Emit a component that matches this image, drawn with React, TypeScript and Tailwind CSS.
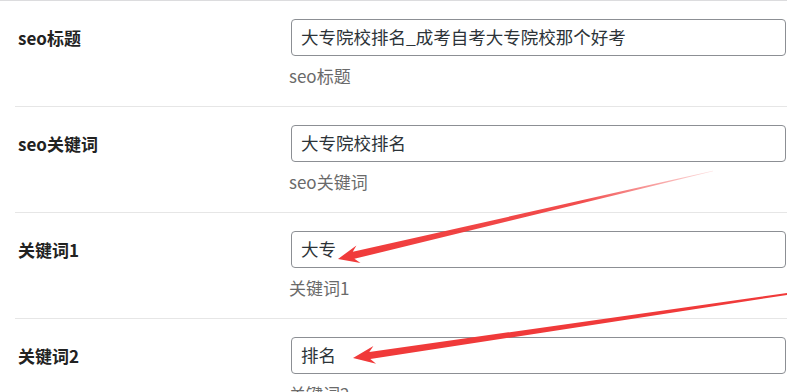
const FIELDS = [
  { label: 'seo标题', value: '大专院校排名_成考自考大专院校那个好考', help: 'seo标题' },
  { label: 'seo关键词', value: '大专院校排名', help: 'seo关键词' },
  { label: '关键词1', value: '大专', help: '关键词1' },
  { label: '关键词2', value: '排名', help: '关键词2' },
];

type Pt = [number, number];

// tapered annotation arrow: thin tail, wide shaft near the head, triangle tip
function arrowPoints(tail: Pt, tip: Pt, headLen = 18, headHalf = 8, shaft = 3, tailW = 0.4) {
  const dx = tip[0] - tail[0];
  const dy = tip[1] - tail[1];
  const len = Math.hypot(dx, dy);
  const ux = dx / len;
  const uy = dy / len;
  const nx = -uy;
  const ny = ux;
  const bx = tip[0] - ux * headLen;
  const by = tip[1] - uy * headLen;
  const pts: Pt[] = [
    [tail[0] + nx * tailW, tail[1] + ny * tailW],
    [bx + ux * 3 + nx * shaft, by + uy * 3 + ny * shaft],
    [bx - ux * 2 + nx * headHalf, by - uy * 2 + ny * headHalf],
    tip,
    [bx - ux * 2 - nx * headHalf, by - uy * 2 - ny * headHalf],
    [bx + ux * 3 - nx * shaft, by + uy * 3 - ny * shaft],
    [tail[0] - nx * tailW, tail[1] - ny * tailW],
  ];
  return pts.map((p) => `${p[0].toFixed(1)},${p[1].toFixed(1)}`).join(' ');
}

function Row({ label, value, help }: { label: string; value: string; help: string }) {
  return (
    <div className="ml-[15px] flex h-[106px] border-b border-[#e6e6e6] pt-[18px]">
      <div className="flex h-[37px] w-[276px] shrink-0 items-center pl-[3px] text-[17px] font-bold text-[#222]">
        {label}
      </div>
      <div className="min-w-0 flex-1 pr-px">
        <div className="flex h-[37px] items-center rounded-[4px] border border-[#8c8f94] bg-white pl-[9px] text-[17.5px] text-[#2c3338]">
          {value}
        </div>
        <div className="mt-[8px] -ml-[2px] text-[17px] leading-6 text-[#6a6a6a]">{help}</div>
      </div>
    </div>
  );
}

export default function App() {
  return (
    <div
      className="relative h-[392px] w-[787px] overflow-hidden border-t border-[#dcdcde] bg-white"
      style={{ fontFamily: '"Microsoft YaHei", "Noto Sans CJK SC", "Noto Sans", sans-serif' }}
    >
      {FIELDS.map((f) => (
        <Row key={f.label} {...f} />
      ))}

      {/* red annotation arrows */}
      <svg className="pointer-events-none absolute left-0 top-0" width="787" height="392" viewBox="0 -1 787 392">
        <defs>
          <linearGradient id="fade1" gradientUnits="userSpaceOnUse" x1="713" y1="169" x2="339" y2="257">
            <stop offset="0" stopColor="#f03a3a" stopOpacity="0.15" />
            <stop offset="0.35" stopColor="#f03a3a" stopOpacity="0.9" />
            <stop offset="1" stopColor="#f03a3a" />
          </linearGradient>
        </defs>
        <polygon points={arrowPoints([713, 169], [338, 257], 19, 9, 3.6, 0.3)} fill="url(#fade1)" />
        <polygon points={arrowPoints([800, 290], [353, 356], 20, 9, 3.6, 0.9)} fill="#f03a3a" />
      </svg>
    </div>
  );
}
